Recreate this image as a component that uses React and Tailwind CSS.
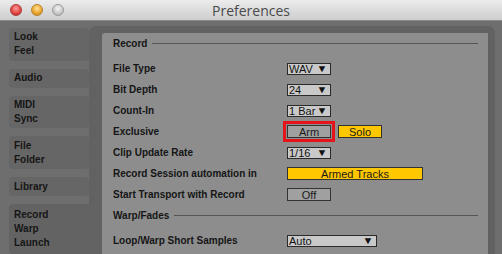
import React from "react";

const font = { fontFamily: '"Liberation Sans", Arial, sans-serif' };

function Tab({ lines, selected }) {
  return (
    <div
      className={`rounded-[4px] px-[5px] flex flex-col justify-center gap-[4px] ${
        selected ? "bg-[#636363] rounded-r-none w-[93px] pt-[6px] pb-[6px]" : "bg-[#666666] w-[80px]"
      } ${lines.length === 1 ? "h-[19px]" : lines.length === 2 ? "h-[33px]" : "h-[50px]"}`}
    >
      {lines.map((l) => (
        <div key={l} className="text-[10px] font-bold leading-[10px] text-[#151515]">
          {l}
        </div>
      ))}
    </div>
  );
}

function Dropdown({ value, w = "w-[44px]" }) {
  return (
    <div className={`${w} h-[12px] bg-[#c9c9c9] border border-[#2a2a2a] flex items-center justify-between pl-[1px] pr-[3px]`}>
      <span className="text-[11px] leading-[10px] text-[#111]">{value}</span>
      <span className="text-[10px] leading-[8px] text-[#111] scale-x-110">▼</span>
    </div>
  );
}

function Btn({ children, yellow, w = "w-[44px]" }) {
  return (
    <div
      className={`${w} h-[13px] border border-[#333] flex items-center justify-center text-[11px] leading-[10px] text-[#1a1a1a] ${
        yellow ? "bg-[#ffc700]" : "bg-[#a0a0a0]"
      }`}
    >
      {children}
    </div>
  );
}

function Row({ label, children }) {
  return (
    <div className="h-[21px] flex items-center">
      <div className="w-[174px] text-[10px] font-bold text-[#151515] leading-[10px]">{label}</div>
      <div className="flex items-center gap-[7px]">{children}</div>
    </div>
  );
}

function Heading({ label }) {
  return (
    <div className="h-[21px] flex items-center pr-[10px]">
      <span className="text-[10px] font-bold text-[#151515] leading-[10px] mr-[5px]">{label}</span>
      <div className="flex-1 h-[1px] bg-[#555555]" />
    </div>
  );
}

export default function App() {
  return (
    <div style={font} className="w-[502px] h-[254px] overflow-hidden bg-[#6e6e6e] flex flex-col">
      {/* title bar */}
      <div className="h-[21px] shrink-0 bg-gradient-to-b from-[#ececec] to-[#cdcdcd] border-b border-[#8a8a8a] relative flex items-center">
        <div className="flex items-center gap-[9px] pl-[10px]">
          <div className="w-[12px] h-[12px] rounded-full bg-[radial-gradient(circle_at_50%_35%,#ff9a9a,#e0443e_60%,#a3201c)] border border-[#b03a35]" />
          <div className="w-[12px] h-[12px] rounded-full bg-[radial-gradient(circle_at_50%_35%,#ffe49a,#e9a22a_60%,#b0741a)] border border-[#b8862f]" />
          <div className="w-[12px] h-[12px] rounded-full bg-[radial-gradient(circle_at_50%_35%,#f4f4f4,#c8c8c8_60%,#9a9a9a)] border border-[#9a9a9a]" />
        </div>
        <div className="absolute inset-0 flex items-center justify-center text-[14px] text-[#4a4a4a]" style={{ fontFamily: '"Open Sans", "Liberation Sans", sans-serif' }}>
          Preferences
        </div>
      </div>
      {/* body */}
      <div className="flex flex-1 min-h-0">
        <div className="w-[89px] shrink-0 pl-[9px] pt-[7px] flex flex-col gap-[8px]">
          <Tab lines={["Look", "Feel"]} />
          <Tab lines={["Audio"]} />
          <Tab lines={["MIDI", "Sync"]} />
          <Tab lines={["File", "Folder"]} />
          <Tab lines={["Library"]} />
          <div className="-mr-[13px] z-10">
            <Tab lines={["Record", "Warp", "Launch"]} selected />
          </div>
        </div>
        <div className="w-[406px] mt-[5px] rounded-t-[7px] bg-[#626262] pl-[13px] pr-[7px] pt-[7px] flex">
          <div className="flex-1 bg-[#8d8d8d] rounded-tl-[3px] pl-[11px]">
            <Heading label="Record" />
            <div className="h-[4px]" />
            <Row label="File Type"><Dropdown value="WAV" /></Row>
            <Row label="Bit Depth"><Dropdown value="24" /></Row>
            <Row label="Count-In"><Dropdown value="1 Bar" /></Row>
            <Row label="Exclusive">
              <div className="relative">
                <Btn>Arm</Btn>
                <div className="absolute -inset-[4px] border-[3px] border-[#e5141a]" />
              </div>
              <Btn yellow>Solo</Btn>
            </Row>
            <Row label="Clip Update Rate"><Dropdown value="1/16" /></Row>
            <Row label="Record Session automation in"><Btn yellow w="w-[136px]">Armed Tracks</Btn></Row>
            <Row label="Start Transport with Record"><Btn>Off</Btn></Row>
            <Heading label="Warp/Fades" />
            <div className="h-[4px]" />
            <Row label="Loop/Warp Short Samples"><Dropdown value="Auto" w="w-[90px]" /></Row>
          </div>
        </div>
      </div>
    </div>
  );
}
